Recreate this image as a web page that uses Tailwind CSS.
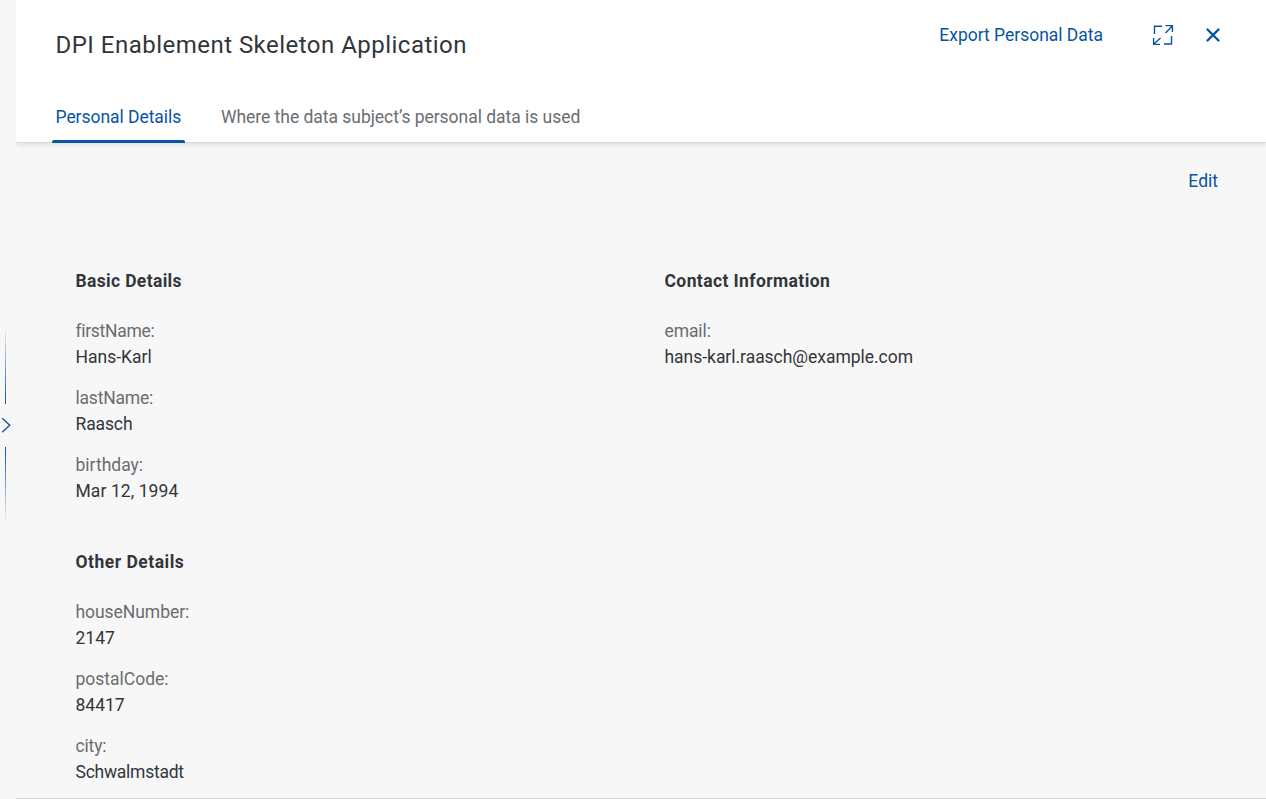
<!DOCTYPE html>
<html lang="en">
<head>
<meta charset="utf-8">
<title>DPI Enablement Skeleton Application</title>
<script src="https://cdn.jsdelivr.net/npm/@tailwindcss/browser@4"></script>
</head>
<body class="flex h-[799px] w-[1266px] overflow-hidden bg-[#f7f7f7] font-[Roboto,sans-serif] text-[17.5px] leading-[26px] text-[#32363a]">
  <aside class="flex w-4 shrink-0 flex-col pt-[330px]">
    <div class="ml-[5px] h-[74px] w-px bg-linear-to-b from-[#0854a0]/5 to-[#0854a0]"></div>
    <svg class="my-[13px] h-[17px] w-4" viewBox="0 0 16 17" fill="none" stroke="#0854a0" stroke-width="1.3"><path d="M2.2 1.2 9.8 8.2 2.2 15.2"/></svg>
    <div class="ml-[5px] h-[73px] w-px bg-linear-to-b from-[#0854a0] to-[#0854a0]/5"></div>
  </aside>
  <main class="flex h-full w-[1250px] flex-col border-b border-[#d5d5d5]">
    <header class="flex h-[143px] shrink-0 flex-col border-b border-[#d9d9d9] bg-white shadow-[0_2px_5px_rgba(0,0,0,0.1)] [clip-path:inset(0_0_-10px_0)]">
      <div class="flex h-[91px] shrink-0 items-start justify-between pl-[39.5px]">
        <h1 class="pt-[29px] text-[24px] leading-8"><span class="tracking-[0.48px]">DPI Enablement Skeleton Application</span></h1>
        <div class="flex items-center pt-[22px] pr-[45px] text-[#0854a0]">
          <button class="mr-[49px]"><span class="tracking-[-0.02px]">Export Personal Data</span></button>
          <svg class="mr-[31px] h-[22px] w-[22px]" viewBox="0 0 22 22" fill="none" stroke="#0854a0" stroke-width="1.4"><path d="M10 2.3H2.5V10M12 20H19.5V12M13.5 1.6H20.4V8M20.2 2 13.5 9M1.6 14V20.4H8M1.8 20 8.5 14"/></svg>
          <svg class="h-4 w-4" viewBox="0 0 16 16" fill="none" stroke="#0854a0" stroke-width="2.4" stroke-linecap="round"><path d="M2.5 2.5 13.5 13.5M13.5 2.5 2.5 13.5"/></svg>
        </div>
      </div>
      <nav class="-mb-px flex h-[52px] shrink-0 pl-9">
        <button class="flex w-[133px] flex-col text-[#0854a0]"><span class="flex h-[49px] items-center px-[3.5px] pt-[3px]"><span class="whitespace-nowrap tracking-[-0.05px]">Personal Details</span></span><span class="h-[3px] w-full rounded-t-[2px] bg-[#0854a0]"></span></button>
        <button class="ml-9 flex h-[49px] items-center pt-[3px] text-[#6a6d70]"><span class="tracking-[-0.035px]">Where the data subject’s personal data is used</span></button>
      </nav>
    </header>
    <div class="flex h-[125px] shrink-0 justify-end pt-[25px] pr-12"><button class="h-[26px] text-[#0854a0]"><span>Edit</span></button></div>
    <div class="flex pl-[59.5px]">
      <div class="flex w-[589px] flex-col gap-[45px]">
        <section>
          <h2 class="mb-6 font-bold"><span class="tracking-[0.34px]">Basic Details</span></h2>
          <dl class="flex flex-col gap-[15px]">
            <div><dt class="text-[#6a6d70]"><span class="tracking-[-0.3px]">firstName:</span></dt><dd><span>Hans-Karl</span></dd></div>
            <div><dt class="text-[#6a6d70]"><span class="tracking-[-0.2px]">lastName:</span></dt><dd><span class="tracking-[-0.12px]">Raasch</span></dd></div>
            <div><dt class="text-[#6a6d70]"><span>birthday:</span></dt><dd><span class="tracking-[0.08px]">Mar 12, 1994</span></dd></div>
          </dl>
        </section>
        <section>
          <h2 class="mb-6 font-bold"><span class="tracking-[0.5px]">Other Details</span></h2>
          <dl class="flex flex-col gap-[15px]">
            <div><dt class="text-[#6a6d70]"><span class="tracking-[-0.05px]">houseNumber:</span></dt><dd><span>2147</span></dd></div>
            <div><dt class="text-[#6a6d70]"><span>postalCode:</span></dt><dd><span>84417</span></dd></div>
            <div><dt class="text-[#6a6d70]"><span class="tracking-[-0.15px]">city:</span></dt><dd><span class="tracking-[-0.25px]">Schwalmstadt</span></dd></div>
          </dl>
        </section>
      </div>
      <section>
        <h2 class="mb-6 font-bold"><span class="tracking-[0.4px]">Contact Information</span></h2>
        <dl><div><dt class="text-[#6a6d70]"><span class="tracking-[-0.1px]">email:</span></dt><dd><span class="tracking-[-0.03px]">hans-karl.raasch@example.com</span></dd></div></dl>
      </section>
    </div>
  </main>
</body>
</html>
